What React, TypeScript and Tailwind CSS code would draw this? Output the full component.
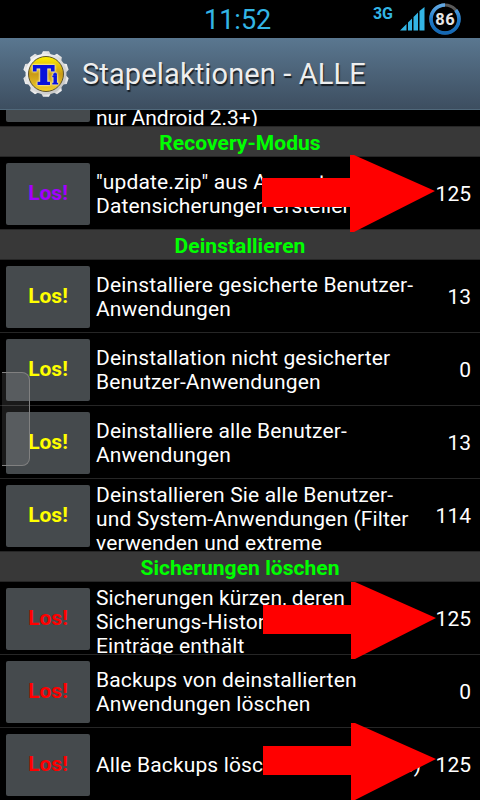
import { FC } from "react";

interface ActionType {
  kind: "action";
  lines: string[];
  count: string;
  color: string;
}

interface SectionType {
  kind: "section";
  title: string;
}

const PURPLE = "text-[#a200ff]";
const YELLOW = "text-[#ffff00]";
const RED = "text-[#ff0000]";

const entries: (ActionType | SectionType)[] = [
  { kind: "section", title: "Recovery-Modus" },
  {
    kind: "action",
    lines: ['"update.zip" aus Apps etc.', "Datensicherungen erstellen"],
    count: "125",
    color: PURPLE,
  },
  { kind: "section", title: "Deinstallieren" },
  {
    kind: "action",
    lines: ["Deinstalliere gesicherte Benutzer-", "Anwendungen"],
    count: "13",
    color: YELLOW,
  },
  {
    kind: "action",
    lines: ["Deinstallation nicht gesicherter", "Benutzer-Anwendungen"],
    count: "0",
    color: YELLOW,
  },
  {
    kind: "action",
    lines: ["Deinstalliere alle Benutzer-", "Anwendungen"],
    count: "13",
    color: YELLOW,
  },
  {
    kind: "action",
    lines: ["Deinstallieren Sie alle Benutzer-", "und System-Anwendungen (Filter", "verwenden und extreme"],
    count: "114",
    color: YELLOW,
  },
  { kind: "section", title: "Sicherungen löschen" },
  {
    kind: "action",
    lines: ["Sicherungen kürzen, deren", "Sicherungs-Historie zu viele", "Einträge enthält"],
    count: "125",
    color: RED,
  },
  {
    kind: "action",
    lines: ["Backups von deinstallierten", "Anwendungen löschen"],
    count: "0",
    color: RED,
  },
  {
    kind: "action",
    lines: ["Alle Backups löschen restlos (alle)"],
    count: "125",
    color: RED,
  },
];

const StatusBar: FC = () => (
  <div className="relative flex h-[38px] shrink-0 items-center justify-end bg-black text-[#33b5e5]">
    <span className="absolute left-[204px] top-[2px] text-[27px] leading-[36px]">11:52</span>
    <span className="mr-[7px] -mt-[11px] text-[16px] font-bold leading-[20px]">3G</span>
    <svg className="mr-[4px] h-[24px] w-[25px]" viewBox="0 0 25 24">
      <path d="M0 23.5 6.5 17V23.5ZM8 15.5 12 11.5V23.5H8ZM13.5 10 18 5.5V23.5H13.5ZM19.5 4 24.5 0V23.5H19.5Z" fill="#33b5e5" />
    </svg>
    <svg className="mr-[19px] h-[32px] w-[32px]" viewBox="0 0 32 32">
      <defs>
        <linearGradient id="ring" x1="0" y1="0" x2="1" y2="0">
          <stop offset="0" stopColor="#1468b4" />
          <stop offset="0.5" stopColor="#1f7ccb" />
          <stop offset="1" stopColor="#62a9e4" />
        </linearGradient>
      </defs>
      <circle cx="16" cy="16" r="14" fill="none" stroke="#5a5a5a" strokeWidth="3" />
      <circle
        cx="16"
        cy="16"
        r="14"
        fill="none"
        stroke="url(#ring)"
        strokeWidth="3.6"
        pathLength="100"
        strokeDasharray="86 14"
        strokeDashoffset="-14"
        transform="rotate(-90 16 16)"
      />
      <text x="16.3" y="21.5" textAnchor="middle" fontSize="16.5" fontWeight="700" letterSpacing="0.5" fill="#e6e6e6">86</text>
    </svg>
  </div>
);

const GearLogo: FC = () => (
  <svg className="h-[48px] w-[48px]" viewBox="0 0 48 48">
    <defs>
      <linearGradient id="metal" x1="0" y1="0" x2="1" y2="1">
        <stop offset="0" stopColor="#ffffff" />
        <stop offset="1" stopColor="#bdbdbd" />
      </linearGradient>
      <linearGradient id="gold" x1="0" y1="0" x2="0" y2="1">
        <stop offset="0" stopColor="#fff200" />
        <stop offset="0.5" stopColor="#c99a16" />
        <stop offset="1" stopColor="#f2cf2c" />
      </linearGradient>
    </defs>
    {[0, 36, 72, 108, 144, 180, 216, 252, 288, 324].map((angle) => (
      <path
        key={angle}
        d="M18.5 6 21 1.2H27L29.5 6Z"
        fill="url(#metal)"
        transform={`rotate(${angle} 24 24)`}
      />
    ))}
    <circle cx="24" cy="24" r="20.5" fill="url(#metal)" />
    <circle cx="24" cy="24" r="17.5" fill="url(#gold)" stroke="#5b5330" strokeWidth="1" />
    <text
      transform="translate(11.5 33.8) scale(1.1 1)"
      className="[filter:drop-shadow(0_0_1px_#fff6c0)_drop-shadow(0_0_0.5px_#fff6c0)]"
      fontFamily="DejaVu Serif"
      fontWeight="700"
      fill="#0912dc"
      stroke="#0912dc"
    >
      <tspan fontSize="25" strokeWidth="1.8">T</tspan>
      <tspan fontSize="14" strokeWidth="0.8" dx="-1.5">i</tspan>
    </text>
  </svg>
);

const ActionRow: FC<{ action: ActionType }> = ({ action }) => (
  <div className="mb-px flex h-[72px] shrink-0 items-start overflow-hidden bg-black">
    <button
      className={`ml-[6px] mt-[6px] h-[62px] w-[84px] shrink-0 rounded-[2px] bg-[#454a4d] text-[21px] font-bold ${action.color}`}
    >
      Los!
    </button>
    <div
      className={`ml-[6px] flex h-[72px] w-[330px] shrink-0 flex-col text-[21px] leading-[24px] tracking-[0.14px] text-white ${
        action.lines.length > 2 ? "justify-start pt-[4px]" : "justify-center pt-[2px]"
      }`}
    >
      {action.lines.map((line) => (
        <span key={line} className="block shrink-0 whitespace-nowrap">
          {line}
        </span>
      ))}
    </div>
    <span className="flex h-[72px] grow items-center justify-end pr-[9px] pt-[3px] text-[21px] text-white">
      {action.count}
    </span>
  </div>
);

const Arrow: FC<{ className: string }> = ({ className }) => (
  <svg className={`absolute h-[77px] w-[173px] ${className}`} viewBox="0 0 173 77">
    <path d="M0 23H88V0H92L173 36L92 77H88V52H0Z" fill="#ff0000" />
  </svg>
);

export default function App() {
  return (
    <div className="relative flex h-[800px] w-[480px] flex-col overflow-hidden bg-black font-['Roboto',sans-serif]">
      <StatusBar />
      <header className="flex h-[72px] shrink-0 items-center border-b border-[#50687a] bg-linear-to-b from-[#5a7790] to-[#3d4e60] pl-[22px]">
        <GearLogo />
        <h1 className="ml-[12px] mt-[2px] text-[29px] tracking-[0.13px] text-[#eeeeee] [text-shadow:1px_2px_1px_#000000b0]">
          Stapelaktionen - ALLE
        </h1>
      </header>

      <main className="flex grow flex-col overflow-hidden bg-[#262626]">
        {/* Tail of the row scrolled under the header */}
        <div className="mb-px flex h-[16px] shrink-0 items-end overflow-hidden bg-black">
          <div className="mb-[4px] ml-[6px] h-[62px] w-[84px] shrink-0 rounded-[2px] bg-[#454a4d]" />
          <span className="-mb-[4px] ml-[6px] text-[21px] leading-[24px] text-white">nur Android 2.3+)</span>
        </div>
        {entries.map((entry, index) =>
          entry.kind === "section" ? (
            <h2
              key={index}
              className="mb-px h-[29px] shrink-0 bg-[#383838] text-center text-[21px] font-bold leading-[32px] tracking-[0.05px] text-[#00ff00]"
            >
              {entry.title}
            </h2>
          ) : (
            <ActionRow key={index} action={entry} />
          )
        )}
      </main>

      {/* Side handle */}
      <div className="absolute left-[2px] top-[372px] h-[94px] w-[28px] rounded-r-[8px] border border-l-0 border-[#808080] bg-white/10" />

      <Arrow className="left-[262px] top-[155px]" />
      <Arrow className="left-[263px] top-[582px]" />
      <Arrow className="left-[263px] top-[723px]" />
    </div>
  );
}
